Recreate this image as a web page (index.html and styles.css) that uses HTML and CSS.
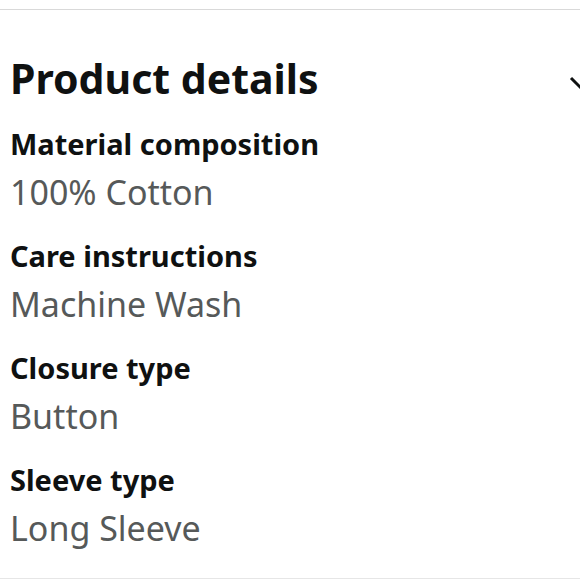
FILE: index.html
```html
<!DOCTYPE html>
<html>
<head>
<meta charset="utf-8">
<link rel="stylesheet" href="styles.css">
</head>
<body>
<section class="details">
  <div class="header">
    <h2 class="title">Product details</h2>
    <svg class="chevron" width="30" height="32" viewBox="0 0 30 32"><path d="M3 16 L15 28 L27 16" fill="none" stroke="#0f1111" stroke-width="3"/></svg>
  </div>
  <div class="item">
    <div class="label">Material composition</div>
    <div class="value">100% Cotton</div>
  </div>
  <div class="item">
    <div class="label">Care instructions</div>
    <div class="value">Machine Wash</div>
  </div>
  <div class="item">
    <div class="label">Closure type</div>
    <div class="value">Button</div>
  </div>
  <div class="item">
    <div class="label">Sleeve type</div>
    <div class="value">Long Sleeve</div>
  </div>
</section>
</body>
</html>
```
FILE: styles.css
```css
html, body {
  margin: 0;
  padding: 0;
  background: #fff;
  overflow: hidden;
}
body {
  font-family: "Noto Sans", "Liberation Sans", sans-serif;
  color: #0f1111;
  width: 580px;
}
.details {
  margin-top: 9px;
  border-top: 1px solid #d9d9d9;
  border-bottom: 1px solid #e6e6e6;
  padding: 46px 0 30px 10px;
  overflow: hidden;
}
.header {
  display: flex;
  align-items: center;
  justify-content: space-between;
  margin-right: -18px;
}
.title {
  margin: 0;
  font-size: 41px;
  line-height: 44px;
  font-weight: 700;
}
.chevron {
  flex: none;
}
.item {
  margin-top: 30.3px;
}
.item + .item {
  margin-top: 29.8px;
}
.label {
  font-size: 29px;
  line-height: 28px;
  font-weight: 700;
}
.value {
  margin-top: 14.2px;
  font-size: 34px;
  line-height: 40px;
  color: #565959;
}
```
